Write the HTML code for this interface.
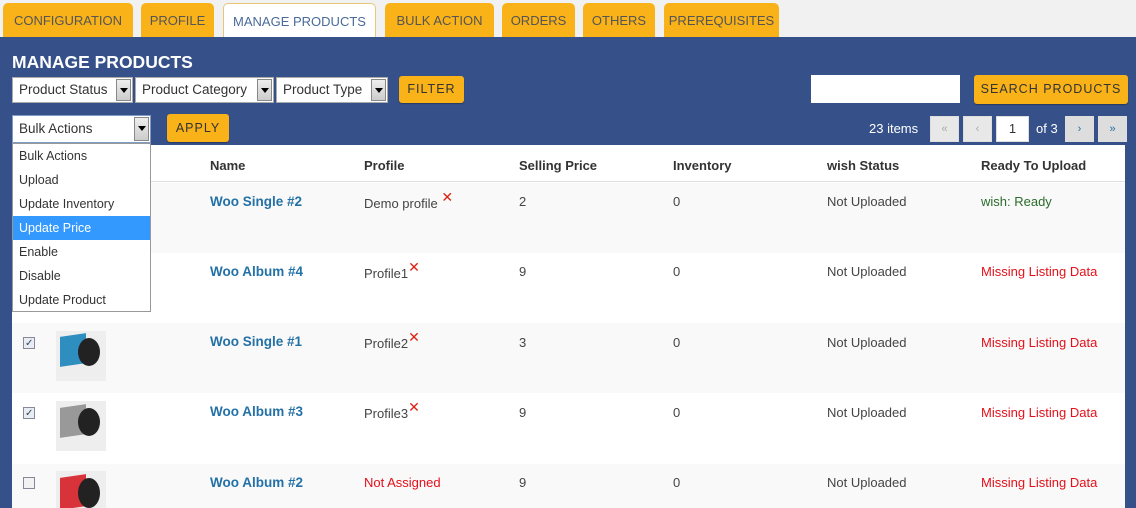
<!DOCTYPE html>
<html style="overflow:hidden;height:508px"><head><style>
*{margin:0;padding:0;box-sizing:border-box}
body{width:1136px;height:508px;overflow:hidden;background:#f1f1f1;font-family:"Liberation Sans",sans-serif;font-size:13px;color:#444;position:relative}
.a{position:absolute;white-space:nowrap}
.tab{position:absolute;top:3px;height:34px;background:#f9b218;border-radius:5px 5px 0 0;color:#555;font-size:13px;text-align:center;line-height:36px}
.tab.on{background:#fff;border:1px solid #e6c77a;border-bottom:none;color:#4a6a9a}
#blue{position:absolute;left:0;top:37px;width:1136px;height:471px;background:#36518a}
.sel{position:absolute;background:#fff;height:26px;border:1px solid #aaa;font-size:13.5px;color:#333;line-height:24px;padding-left:6px}
.sel i{position:absolute;right:1px;top:1px;width:15px;height:22px;background:linear-gradient(#eee,#ccc);border:1px solid #888}
.sel i:after{content:"";position:absolute;left:3px;top:8px;border:4px solid transparent;border-top:5px solid #000}
.btn{position:absolute;background:#f9b218;border-radius:3px;color:#333;font-size:12.5px;letter-spacing:1px;text-align:center;box-shadow:0 1px 1px rgba(0,0,0,.3)}
#tbl{position:absolute;left:12px;top:145px;width:1113px;height:363px;background:#fff;overflow:hidden}
.row{position:absolute;left:0;width:1113px;height:70px}
.hd{font-weight:bold;color:#333}
.nm{color:#2371a6;font-weight:bold;font-size:13.5px}
.red{color:#e3101a}
.x{color:#d21;font-size:14px}
.pg{position:absolute;top:116px;height:26px;background:#e8e8e8;border:1px solid #ddd;color:#aaa;font-size:11px;text-align:center;line-height:24px}
.cb{position:absolute;width:12px;height:12px;border:1px solid #889;background:#e8ecf5}
.img{position:absolute;width:50px;height:50px;background:#eee;overflow:hidden}
.dd{position:absolute;left:12px;top:143px;width:139px;height:169px;background:#fff;border:1px solid #999;font-size:12.5px;color:#333}
.dd div{height:24px;line-height:24px;padding-left:6px}
</style></head><body>
<div class="tab" style="left:3px;width:130px">CONFIGURATION</div>
<div class="tab" style="left:141px;width:73px">PROFILE</div>
<div class="tab on" style="left:223px;width:153px">MANAGE PRODUCTS</div>
<div class="tab" style="left:385px;width:109px">BULK ACTION</div>
<div class="tab" style="left:502px;width:73px">ORDERS</div>
<div class="tab" style="left:583px;width:72px">OTHERS</div>
<div class="tab" style="left:664px;width:115px">PREREQUISITES</div>
<div id="blue"></div>
<div class="a" style="left:12px;top:52px;color:#fff;font-weight:bold;font-size:17.5px">MANAGE PRODUCTS</div>
<div class="sel" style="left:12px;top:77px;width:121px">Product Status<i></i></div>
<div class="sel" style="left:135px;top:77px;width:139px">Product Category<i></i></div>
<div class="sel" style="left:276px;top:77px;width:112px">Product Type<i></i></div>
<div class="btn" style="left:399px;top:76px;width:65px;height:27px;line-height:27px">FILTER</div>
<div class="a" style="left:811px;top:75px;width:149px;height:28px;background:#fff"></div>
<div class="btn" style="left:974px;top:75px;width:154px;height:29px;line-height:29px">SEARCH PRODUCTS</div>
<div class="sel" style="left:12px;top:115px;width:139px;height:28px;line-height:26px;border-color:#7e9bc7">Bulk Actions<i style="height:24px"></i></div>
<div class="btn" style="left:167px;top:114px;width:62px;height:28px;line-height:28px">APPLY</div>
<div class="a" style="left:869px;top:121px;color:#fff;font-size:13px">23 items</div>
<div class="pg" style="left:930px;width:29px">«</div>
<div class="pg" style="left:963px;width:29px">‹</div>
<div class="pg" style="left:996px;width:33px;background:#fff;color:#333;font-size:13px">1</div>
<div class="a" style="left:1036px;top:121px;color:#fff">of 3</div>
<div class="pg" style="left:1065px;width:29px;background:#ddd;color:#2371a6">›</div>
<div class="pg" style="left:1098px;width:29px;background:#ddd;color:#2371a6">»</div>
<div id="tbl">
<div class="row" style="top:0;height:37px;border-bottom:1px solid #e1e1e1"></div>
<div class="a hd" style="left:198px;top:13px">Name</div>
<div class="a hd" style="left:352px;top:13px">Profile</div>
<div class="a hd" style="left:507px;top:13px">Selling Price</div>
<div class="a hd" style="left:661px;top:13px">Inventory</div>
<div class="a hd" style="left:815px;top:13px">wish Status</div>
<div class="a hd" style="left:969px;top:13px">Ready To Upload</div>

<div class="row" style="top:38px;background:#f9f9f9"></div>
<div class="row" style="top:108px;background:#fff"></div>
<div class="row" style="top:178px;background:#f9f9f9"></div>
<div class="row" style="top:249px;background:#fff"></div>
<div class="row" style="top:319px;background:#f9f9f9"></div>

<div class="a nm" style="left:198px;top:49px">Woo Single #2</div>
<div class="a" style="left:352px;top:50px">Demo profile <span class="x" style="position:relative;top:-6px">✕</span></div>
<div class="a" style="left:507px;top:49px">2</div><div class="a" style="left:661px;top:49px">0</div>
<div class="a" style="left:815px;top:49px">Not Uploaded</div>
<div class="a" style="left:969px;top:49px;color:#2b6b2b">wish: Ready</div>

<div class="a nm" style="left:198px;top:119px">Woo Album #4</div>
<div class="a" style="left:352px;top:120px">Profile1<span class="x" style="position:relative;top:-6px">✕</span></div>
<div class="a" style="left:507px;top:119px">9</div><div class="a" style="left:661px;top:119px">0</div>
<div class="a" style="left:815px;top:119px">Not Uploaded</div>
<div class="a red" style="left:969px;top:119px">Missing Listing Data</div>

<div class="cb" style="left:11px;top:192px"></div><div class="img" style="left:44px;top:186px"></div>
<div class="a nm" style="left:198px;top:189px">Woo Single #1</div>
<div class="a" style="left:352px;top:190px">Profile2<span class="x" style="position:relative;top:-6px">✕</span></div>
<div class="a" style="left:507px;top:190px">3</div><div class="a" style="left:661px;top:190px">0</div>
<div class="a" style="left:815px;top:190px">Not Uploaded</div>
<div class="a red" style="left:969px;top:190px">Missing Listing Data</div>

<div class="cb" style="left:11px;top:262px"></div><div class="img" style="left:44px;top:256px"></div>
<div class="a nm" style="left:198px;top:259px">Woo Album #3</div>
<div class="a" style="left:352px;top:260px">Profile3<span class="x" style="position:relative;top:-6px">✕</span></div>
<div class="a" style="left:507px;top:260px">9</div><div class="a" style="left:661px;top:260px">0</div>
<div class="a" style="left:815px;top:260px">Not Uploaded</div>
<div class="a red" style="left:969px;top:260px">Missing Listing Data</div>

<div class="cb" style="left:11px;top:332px;background:#f2f2f2"></div><div class="img" style="left:44px;top:326px"></div>
<div class="a nm" style="left:198px;top:330px">Woo Album #2</div>
<div class="a red" style="left:352px;top:330px">Not Assigned</div>
<div class="a" style="left:507px;top:330px">9</div><div class="a" style="left:661px;top:330px">0</div>
<div class="a" style="left:815px;top:330px">Not Uploaded</div>
<div class="a red" style="left:969px;top:330px">Missing Listing Data</div>

<div class="a" style="left:48px;top:190px;width:26px;height:30px;background:#2f8ec0;transform:skewY(-8deg)"></div>
<div class="a" style="left:66px;top:193px;width:22px;height:28px;border-radius:50%;background:#222"></div>
<div class="a" style="left:48px;top:261px;width:26px;height:30px;background:#999;transform:skewY(-8deg)"></div>
<div class="a" style="left:66px;top:263px;width:22px;height:28px;border-radius:50%;background:#222"></div>
<div class="a" style="left:48px;top:331px;width:26px;height:32px;background:#d8323a;transform:skewY(-8deg)"></div>
<div class="a" style="left:66px;top:333px;width:22px;height:30px;border-radius:50%;background:#222"></div>
<div class="a" style="left:13px;top:193px;color:#345;font-size:10px">✓</div>
<div class="a" style="left:13px;top:263px;color:#345;font-size:10px">✓</div>
</div>
<div class="dd">
<div>Bulk Actions</div><div>Upload</div><div>Update Inventory</div>
<div style="background:#3399ff;color:#fff">Update Price</div>
<div>Enable</div><div>Disable</div><div>Update Product</div>
</div>
</body></html>
